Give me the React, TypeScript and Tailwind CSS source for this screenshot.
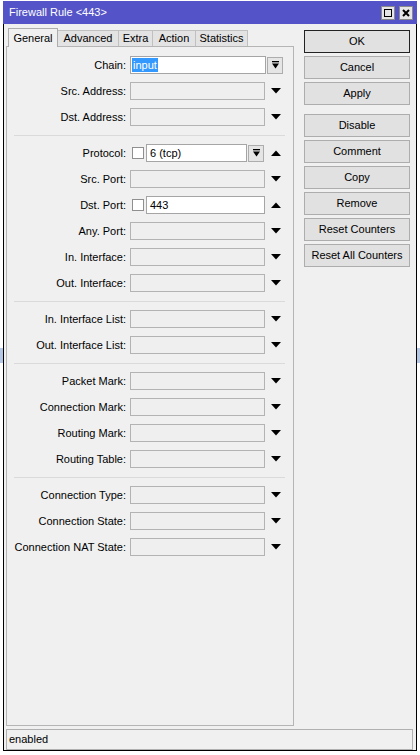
import React from "react";

type Kind = "plain" | "chain" | "protocol" | "dstport";

interface Row {
  label: string;
  kind?: Kind;
}

const GROUPS: Row[][] = [
  [{ label: "Chain:", kind: "chain" }, { label: "Src. Address:" }, { label: "Dst. Address:" }],
  [
    { label: "Protocol:", kind: "protocol" },
    { label: "Src. Port:" },
    { label: "Dst. Port:", kind: "dstport" },
    { label: "Any. Port:" },
    { label: "In. Interface:" },
    { label: "Out. Interface:" },
  ],
  [{ label: "In. Interface List:" }, { label: "Out. Interface List:" }],
  [
    { label: "Packet Mark:" },
    { label: "Connection Mark:" },
    { label: "Routing Mark:" },
    { label: "Routing Table:" },
  ],
  [
    { label: "Connection Type:" },
    { label: "Connection State:" },
    { label: "Connection NAT State:" },
  ],
];

// tab widths are fixed, the WinBox font is narrower than ours
const TABS = [
  { name: "General", w: "w-[50px]" },
  { name: "Advanced", w: "w-[62px]" },
  { name: "Extra", w: "w-[35px]" },
  { name: "Action", w: "w-[44px]" },
  { name: "Statistics", w: "w-[53px]" },
];

const BUTTONS = [
  ["OK", "Cancel", "Apply"],
  ["Disable", "Comment", "Copy", "Remove", "Reset Counters", "Reset All Counters"],
];

function Down() {
  return (
    <svg width="10" height="6" viewBox="0 0 10 6">
      <polygon points="0,0 10,0 5,5.5" fill="#000" />
    </svg>
  );
}

function Up() {
  return (
    <svg width="10" height="6" viewBox="0 0 10 6">
      <polygon points="0,6 10,6 5,0.5" fill="#000" />
    </svg>
  );
}

function ComboButton() {
  return (
    <div className="ml-px flex h-[17px] w-[16px] items-center justify-center border border-[#adadad] bg-[#e5e5e5]">
      <svg width="7" height="8" viewBox="0 0 7 8">
        <rect x="0" y="0" width="7" height="1.3" fill="#000" />
        <polygon points="0,2.5 7,2.5 3.5,7.5" fill="#000" />
      </svg>
    </div>
  );
}

function Checkbox() {
  return <div className="ml-[2px] h-[12px] w-[12px] border border-[#8f8f8f] bg-white" />;
}

function Field({ kind = "plain" }: { kind?: Kind }) {
  if (kind === "chain") {
    return (
      <>
        <div className="flex h-[18px] w-[136px] items-center border border-[#a5a5a5] bg-white pl-px">
          <span className="bg-[#3399ff] px-px leading-[14px] text-white">input</span>
        </div>
        <ComboButton />
      </>
    );
  }
  if (kind === "protocol") {
    return (
      <>
        <div className="flex w-[135px] items-center">
          <Checkbox />
          <div className="ml-[2px] flex h-[18px] w-[101px] items-center border border-[#a5a5a5] bg-white pl-[3px]">
            6 (tcp)
          </div>
          <ComboButton />
        </div>
        <div className="pl-[6px]">
          <Up />
        </div>
      </>
    );
  }
  if (kind === "dstport") {
    return (
      <>
        <div className="flex w-[135px] items-center">
          <Checkbox />
          <div className="ml-[2px] flex h-[18px] w-[120px] items-center border border-[#a5a5a5] bg-white pl-[3px]">
            443
          </div>
        </div>
        <div className="pl-[6px]">
          <Up />
        </div>
      </>
    );
  }
  return (
    <>
      <div className="h-[18px] w-[135px] border border-[#b3b3b3] bg-[#efefef]" />
      <div className="pl-[6px]">
        <Down />
      </div>
    </>
  );
}

export default function App() {
  return (
    <div
      className="relative h-[755px] w-[420px] overflow-hidden bg-white text-[11px] text-black"
      style={{ fontFamily: '"Liberation Sans", Arial, sans-serif' }}
    >
      {/* desktop behind the window */}
      <div className="absolute left-0 top-[348px] h-[15px] w-[420px] bg-[#b4c8e6]" />

      {/* Window */}
      <div className="relative ml-[3px] mt-px w-[414px]">
        {/* Title bar */}
        <div className="flex h-[23px] items-center justify-between bg-[#5454c8] pl-[6px] pr-[4px]">
          <span className="text-[11px] text-white">Firewall Rule &lt;443&gt;</span>
          <div className="flex gap-[4px]">
            <div className="flex h-[14px] w-[14px] items-center justify-center border border-[#8a8a8a] bg-[#e6e6e6]">
              <div className="h-[8px] w-[8px] border border-black" />
            </div>
            <div className="flex h-[14px] w-[14px] items-center justify-center border border-[#8a8a8a] bg-[#e6e6e6]">
              <svg width="8" height="8" viewBox="0 0 8 8">
                <path d="M1 1L7 7M7 1L1 7" stroke="#000" strokeWidth="2" />
              </svg>
            </div>
          </div>
        </div>

        {/* Body */}
        <div className="border-x border-b border-black bg-[#f0f0f0] px-[2px]">
          <div className="flex pt-[4px]">
            {/* Tabs + panel */}
            <div className="flex w-[288px] flex-col">
              <div className="flex h-[18px] items-end pl-[2px]">
                {TABS.map((t, i) =>
                  i === 0 ? (
                    <div
                      key={t.name}
                      className={`relative z-10 -mb-px flex h-[19px] items-center justify-center border border-b-0 border-[#adadad] bg-[#f0f0f0] ${t.w}`}
                    >
                      {t.name}
                    </div>
                  ) : (
                    <div
                      key={t.name}
                      className={`-ml-px flex h-[16px] items-center justify-center border border-b-0 border-[#c0c0c0] bg-[#e3e3e3] ${t.w}`}
                    >
                      {t.name}
                    </div>
                  )
                )}
              </div>
              <div className="h-[680px] border border-[#b5b5b5] bg-[#f0f0f0] pt-[5px]">
                {GROUPS.map((group, gi) => (
                  <div key={gi}>
                    {gi > 0 && (
                      <div className="flex h-[10px] items-center">
                        <div className="ml-[7px] h-px w-[271px] bg-[#dadada]" />
                      </div>
                    )}
                    {group.map((row) => (
                      <div key={row.label} className="flex h-[26px] items-center">
                        <div className="w-[119px] whitespace-nowrap text-right">{row.label}</div>
                        <div className="ml-[4px] flex items-center">
                          <Field kind={row.kind} />
                        </div>
                      </div>
                    ))}
                  </div>
                ))}
              </div>
            </div>

            {/* Buttons */}
            <div className="ml-[10px] flex flex-col pt-[2px]">
              {BUTTONS.map((grp, gi) => (
                <div key={gi} className={gi > 0 ? "mt-[9px] flex flex-col gap-[3px]" : "flex flex-col gap-[3px]"}>
                  {grp.map((b) => (
                    <div
                      key={b}
                      className={
                        b === "OK"
                          ? "flex h-[23px] w-[106px] items-center justify-center border border-[#222] bg-[#e1e1e1]"
                          : "flex h-[23px] w-[106px] items-center justify-center border border-[#adadad] bg-[#e1e1e1]"
                      }
                    >
                      {b}
                    </div>
                  ))}
                </div>
              ))}
            </div>
          </div>

          {/* Status bar */}
          <div className="mt-[3px] flex h-[21px] w-[407px] items-center border border-[#b0b0b0] pl-[2px]">
            enabled
          </div>
        </div>
      </div>
    </div>
  );
}
